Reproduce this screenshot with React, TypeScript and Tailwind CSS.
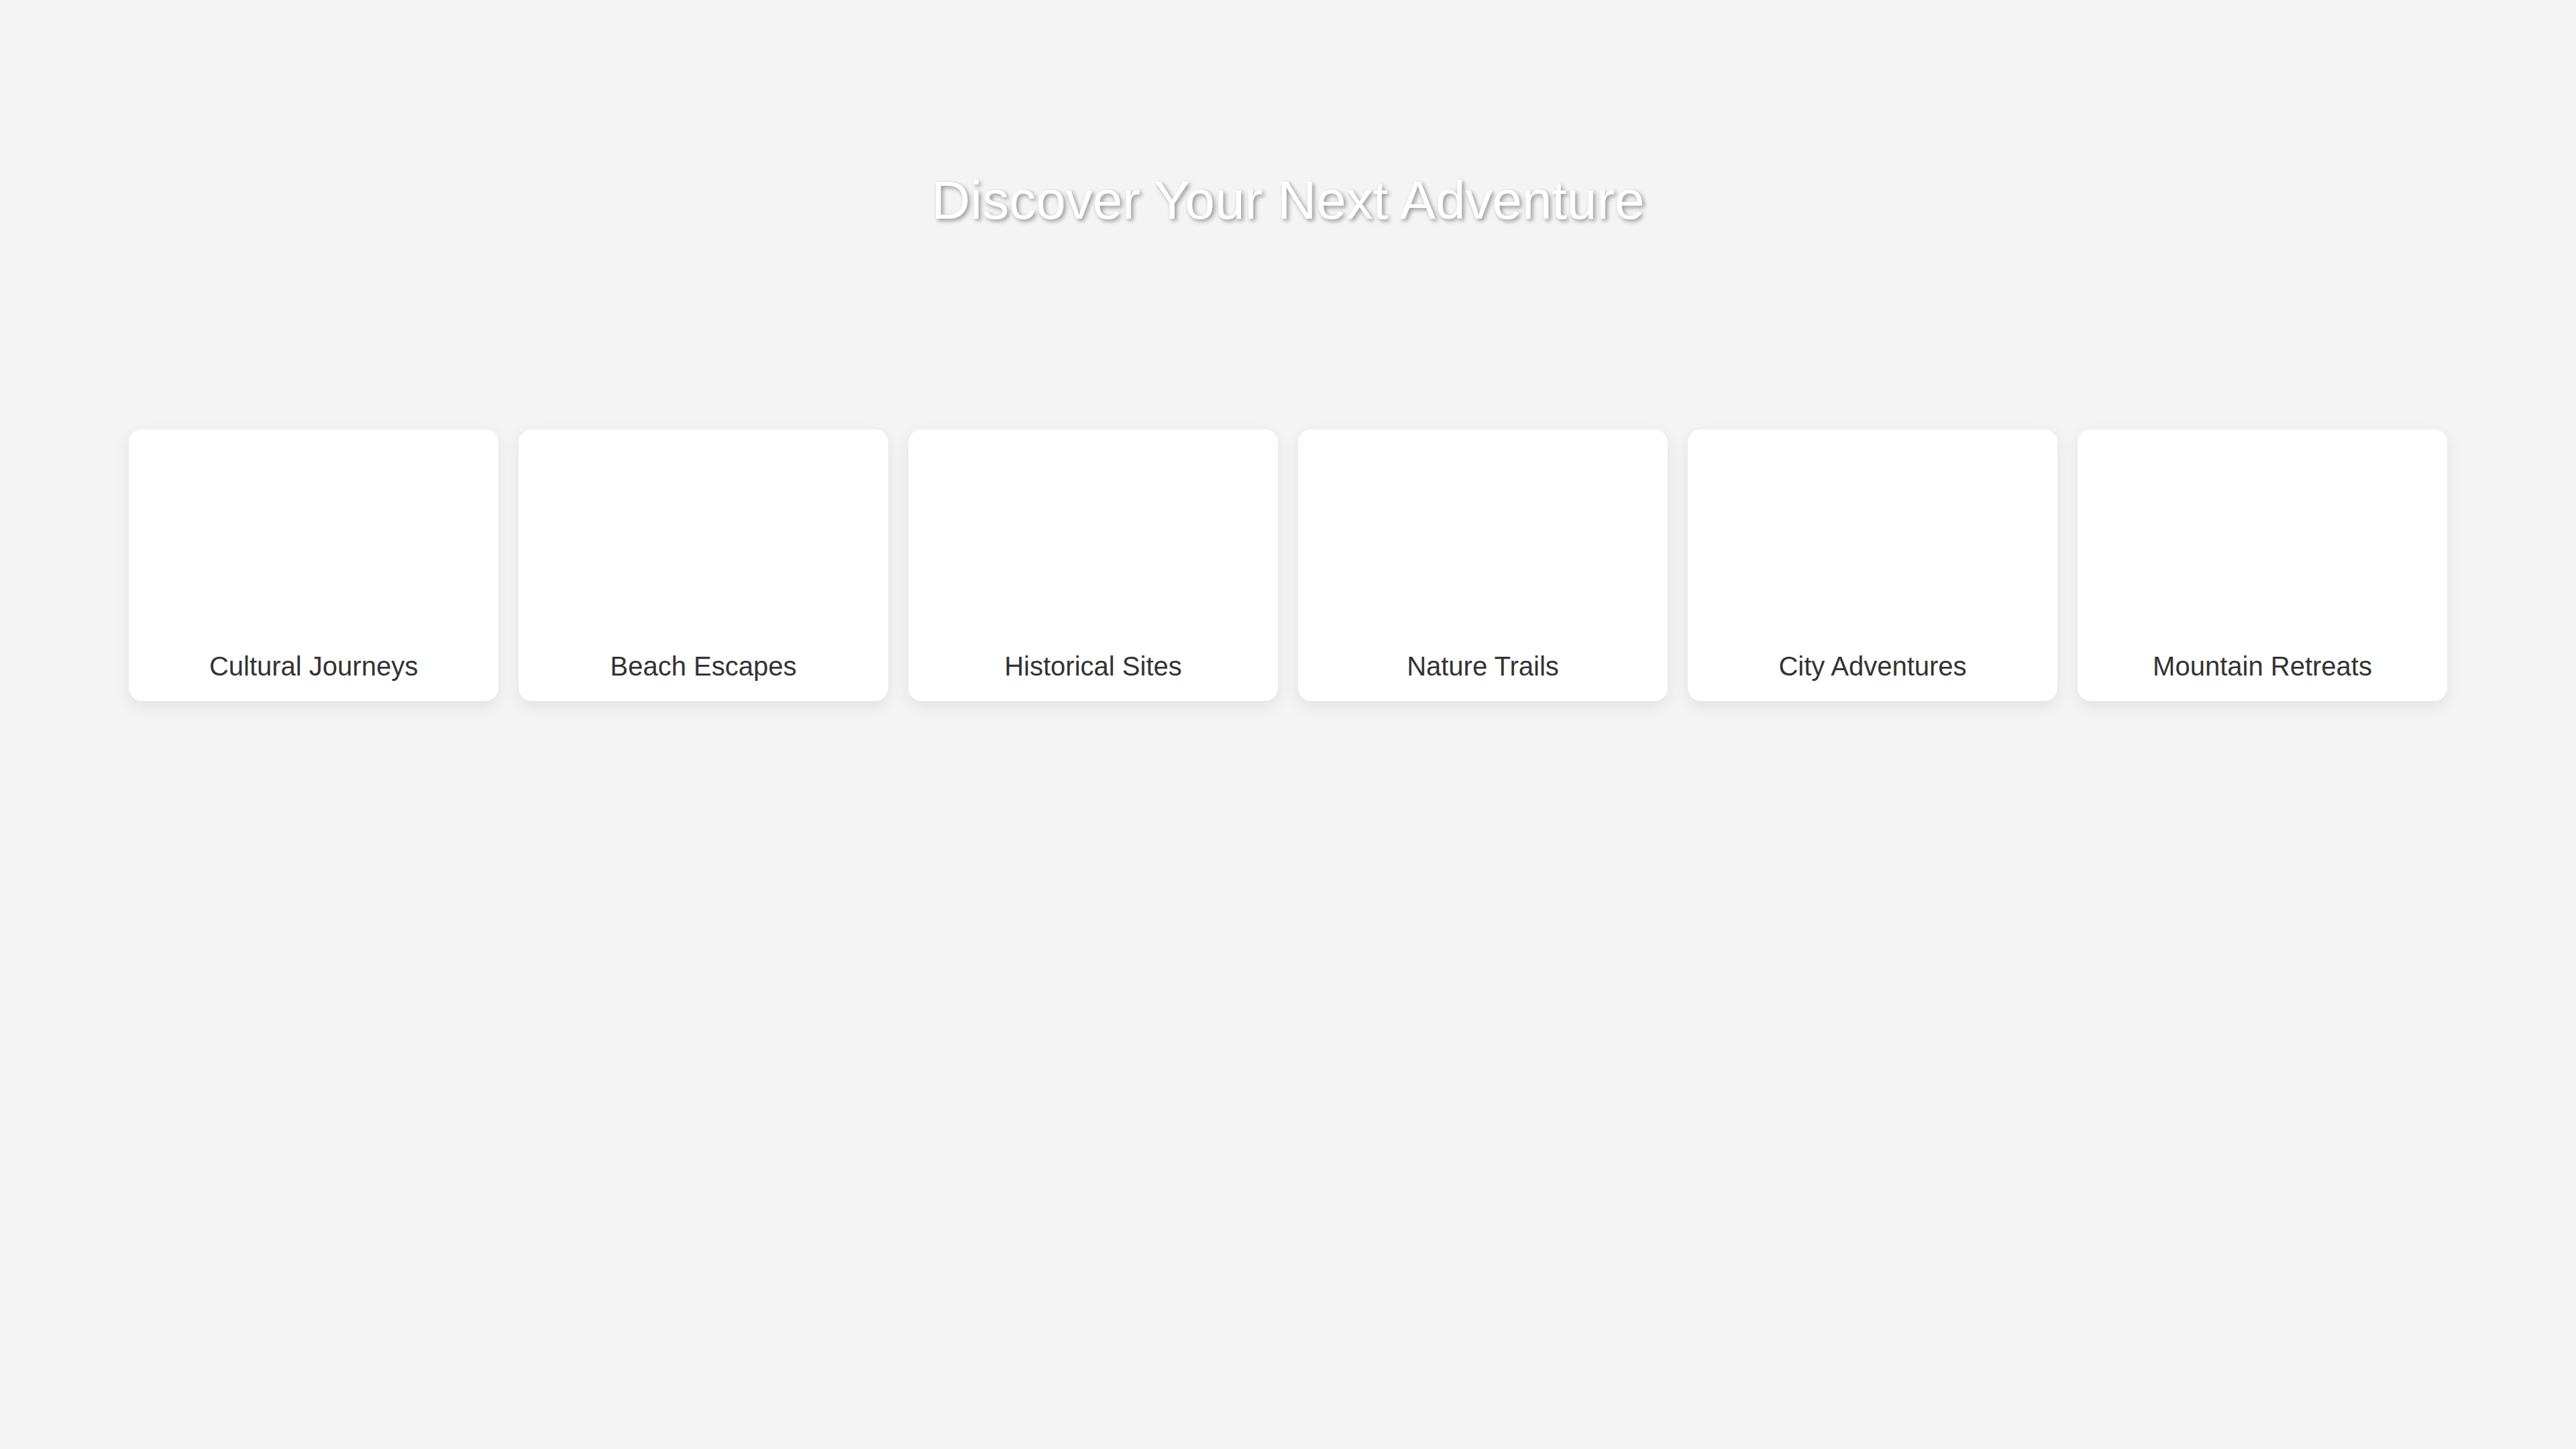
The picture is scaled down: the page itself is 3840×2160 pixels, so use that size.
import React from 'react';

const categories = [
  'Cultural Journeys',
  'Beach Escapes',
  'Historical Sites',
  'Nature Trails',
  'City Adventures',
  'Mountain Retreats',
];

const CategoryCard = ({ title }: { title: string }) => (
  <div className="flex h-[405px] flex-col justify-end rounded-[20px] bg-white pb-[29px] shadow-[0_8px_24px_rgba(0,0,0,0.08)]">
    <span className="text-center text-[40px] leading-[46px] text-[#333333]">{title}</span>
  </div>
);

export default function App() {
  return (
    <div className="min-h-screen bg-[#f4f4f4] font-['Liberation_Sans',Arial,sans-serif]">
      {/* Hero */}
      <header className="pt-[253px] text-center">
        <h1 className="text-[80px] leading-[92px] font-normal text-white [text-shadow:3px_3px_6px_rgba(0,0,0,0.4)]">
          Discover Your Next Adventure
        </h1>
      </header>

      {/* Categories */}
      <section className="mt-[295px] grid grid-cols-6 gap-[30px] px-[192px]">
        {categories.map((c) => (
          <CategoryCard key={c} title={c} />
        ))}
      </section>
    </div>
  );
}
